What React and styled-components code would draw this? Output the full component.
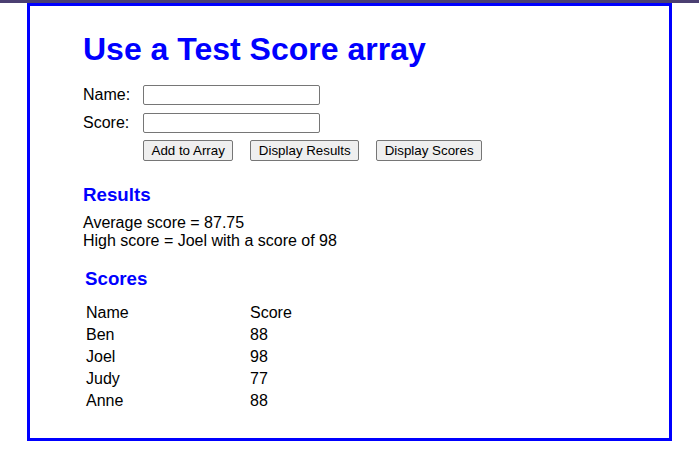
import React from "react";
import styled, { createGlobalStyle } from "styled-components";

const GlobalStyle = createGlobalStyle`
  body {
    margin: 0;
    background: #fff;
    font-family: "Liberation Sans", Arial, sans-serif;
    font-size: 16px;
    color: #000;
  }
`;

const TopBar = styled.div`
  height: 3px;
  background: #4b3f72;
`;

const Main = styled.main`
  box-sizing: border-box;
  width: 645px;
  height: 438px;
  margin-left: 27px;
  border: 3px solid #0000ff;
  padding: 25px 0 0 53px;
`;

const Title = styled.h1`
  margin: 0 0 17px;
  font-size: 32px;
  line-height: 37px;
  color: #0000ff;
`;

const Form = styled.div`
  display: grid;
  grid-template-columns: 60px auto;
  row-gap: 8px;
  align-items: center;
`;

const Label = styled.label`
  line-height: 18px;
`;

const Input = styled.input`
  box-sizing: border-box;
  width: 177px;
  height: 20px;
  border: 1px solid #767676;
  border-radius: 2px;
  padding: 1px 2px;
  font: 13.33px "Liberation Sans", Arial, sans-serif;
`;

const Buttons = styled.div`
  grid-column: 2;
  display: flex;
  gap: 17px;
  margin-top: -1px;
`;

const Button = styled.button`
  box-sizing: border-box;
  height: 21px;
  padding: 1px 7.5px;
  background: #efefef;
  border: 1px solid #767676;
  border-radius: 2px;
  font: 13.33px "Liberation Sans", Arial, sans-serif;
  color: #000;
`;

const Heading = styled.h3`
  margin: 0;
  font-size: 18.72px;
  line-height: 21.5px;
  color: #0000ff;
  padding-left: ${(p) => p.$indent || 0}px;
`;

const ResultsBlock = styled.section`
  margin-top: 23px;
`;

const Lines = styled.div`
  margin-top: 8px;
  line-height: 18.4px;
`;

const ScoresBlock = styled.section`
  margin-top: 18px;
`;

const Table = styled.table`
  margin-top: 11px;
  border-spacing: 2px;
  font-size: 16px;

  td {
    padding: 1px;
    line-height: 18px;
  }
  td:first-child {
    width: 160px;
  }
`;

const scores = [
  ["Ben", 88],
  ["Joel", 98],
  ["Judy", 77],
  ["Anne", 88],
];

export default function App() {
  return (
    <>
      <GlobalStyle />
      <TopBar />
      <Main>
        <Title>Use a Test Score array</Title>
        <Form>
          <Label>Name:</Label>
          <Input type="text" />
          <Label>Score:</Label>
          <Input type="text" />
          <Buttons>
            <Button>Add to Array</Button>
            <Button>Display Results</Button>
            <Button>Display Scores</Button>
          </Buttons>
        </Form>
        <ResultsBlock>
          <Heading>Results</Heading>
          <Lines>
            <div>Average score = 87.75</div>
            <div>High score = Joel with a score of 98</div>
          </Lines>
        </ResultsBlock>
        <ScoresBlock>
          <Heading $indent={2}>Scores</Heading>
          <Table>
            <tbody>
              <tr>
                <td>Name</td>
                <td>Score</td>
              </tr>
              {scores.map(([name, score]) => (
                <tr key={name}>
                  <td>{name}</td>
                  <td>{score}</td>
                </tr>
              ))}
            </tbody>
          </Table>
        </ScoresBlock>
      </Main>
    </>
  );
}
